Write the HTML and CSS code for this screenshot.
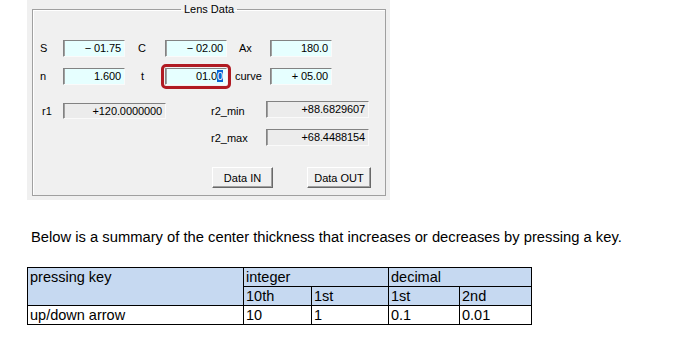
FILE: index.html
```html
<!DOCTYPE html>
<html lang="en">
  <head>
    <meta charset="UTF-8" />
    <title>Lens Data</title>
    <link rel="stylesheet" href="styles.css">
  </head>
  <body>
    <div class="panel">
      <fieldset class="group">
        <legend>Lens Data</legend>
        <div class="row row-first">
          <span class="lbl lbl-s">S</span>
          <span class="field">− 01.75</span>
          <span class="lbl lbl-c">C</span>
          <span class="field">− 02.00</span>
          <span class="lbl lbl-ax">Ax</span>
          <span class="field">180.0</span>
        </div>
        <div class="row row-second">
          <span class="lbl lbl-s">n</span>
          <span class="field">1.600</span>
          <span class="lbl lbl-t">t</span>
          <span class="field focus">01.0<span class="sel">0</span></span>
          <span class="lbl lbl-curve">curve</span>
          <span class="field">+ 05.00</span>
        </div>
        <div class="row row-third">
          <span class="lbl lbl-r1">r1</span>
          <span class="field wide readonly low">+120.0000000</span>
          <span class="lbl lbl-r2">r2_min</span>
          <span class="field wide readonly">+88.6829607</span>
        </div>
        <div class="row row-fourth">
          <span class="spacer"></span>
          <span class="lbl lbl-r2">r2_max</span>
          <span class="field wide readonly">+68.4488154</span>
        </div>
        <div class="row row-buttons">
          <button type="button" class="btn btn-in">Data IN</button>
          <button type="button" class="btn btn-out">Data OUT</button>
        </div>
      </fieldset>
    </div>

    <p class="note">Below is a summary of the center thickness that increases or decreases by pressing a key.</p>

    <table class="keys">
      <colgroup>
        <col class="c-key" />
        <col class="c-10th" />
        <col class="c-1st" />
        <col class="c-d1" />
        <col class="c-d2" />
      </colgroup>
      <tr class="head">
        <td rowspan="2">pressing key</td>
        <td colspan="2">integer</td>
        <td colspan="2">decimal</td>
      </tr>
      <tr class="head">
        <td>10th</td>
        <td>1st</td>
        <td>1st</td>
        <td>2nd</td>
      </tr>
      <tr>
        <td>up/down arrow</td>
        <td>10</td>
        <td>1</td>
        <td>0.1</td>
        <td>0.01</td>
      </tr>
    </table>
  </body>
</html>
```

FILE: styles.css
```css
body {
  margin: 0;
  background: #fff;
  font-family: "Liberation Sans", Arial, sans-serif;
  color: #000;
}

/* dialog */
.panel {
  margin-left: 27px;
  width: 363px;
  height: 200px;
  box-sizing: border-box;
  padding: 3px 0 0 5px;
  background: #f0f0f0;
  font-size: 11px;
}
.group {
  box-sizing: border-box;
  width: 354px;
  height: 193px;
  margin: 0;
  padding: 0;
  border: 1px solid #a0a0a0;
  box-shadow: inset 1px 1px 0 #fff;
}
.group legend {
  margin: 0 auto;
  padding: 0 3px;
  line-height: 13px;
}
.row {
  display: flex;
  align-items: center;
  height: 17px;
}
.row-first { margin-top: 24px; }
.row-second { margin-top: 11px; }
.row-third { margin-top: 16px; align-items: flex-start; }
.row-fourth { margin-top: 11px; }
.row-buttons { margin-top: 21px; height: 21px; }

.lbl {
  box-sizing: border-box;
  line-height: 17px;
}
.lbl-s { width: 30px; padding-left: 7px; }
.lbl-c { width: 40px; padding-left: 13px; }
.lbl-ax { width: 43px; padding-left: 12px; }
.lbl-t { width: 40px; padding-left: 16px; }
.lbl-curve { width: 43px; padding-left: 8px; }
.lbl-r1 { width: 30px; padding-left: 9px; margin-top: 2px; }
.lbl-r2 { width: 100px; padding-left: 45px; margin-top: 2px; }
.spacer { width: 133px; }

.field {
  box-sizing: border-box;
  width: 62px;
  height: 17px;
  padding-right: 3px;
  text-align: right;
  line-height: 15px;
  background: #e6ffff;
  border: 1px solid;
  border-color: #828282 #fafafa #fafafa #828282;
  box-shadow: inset 1px 0 0 #a0a0a0;
  letter-spacing: -0.1px;
}
.field.wide { width: 103px; }
.field.readonly { background: #ececec; }
.field.low { margin-top: 2px; height: 16px; }
.field.focus {
  outline: 3px solid #b01a22;
  outline-offset: 1px;
  border-radius: 1px;
}
.sel {
  background: #0a64d0;
  color: #fff;
}

.btn {
  box-sizing: border-box;
  height: 21px;
  padding: 0;
  font-family: "Liberation Sans", Arial, sans-serif;
  font-size: 11px;
  color: #000;
  background: #f0f0f0;
  border: 1px solid;
  border-color: #fff #696969 #696969 #fff;
  box-shadow: inset -1px -1px 0 #a0a0a0;
}
.btn-in { width: 61px; margin-left: 179px; }
.btn-out { width: 64px; margin-left: 34px; }

/* summary text and table */
.note {
  margin: 29px 0 0 31px;
  font-size: 14.75px;
  line-height: 17px;
}
.keys {
  margin: 21px 0 0 27px;
  border-collapse: collapse;
  table-layout: fixed;
  width: 505px;
  font-size: 14.5px;
}
.keys td {
  height: 18px;
  padding: 0 2px;
  line-height: 18px;
  border: 1px solid #000;
  vertical-align: top;
  white-space: nowrap;
}
.keys .head td { background: #c6d9f1; }
.c-key { width: 216px; }
.c-10th { width: 68px; }
.c-1st { width: 77px; }
.c-d1 { width: 71px; }
.c-d2 { width: 72px; }
```
